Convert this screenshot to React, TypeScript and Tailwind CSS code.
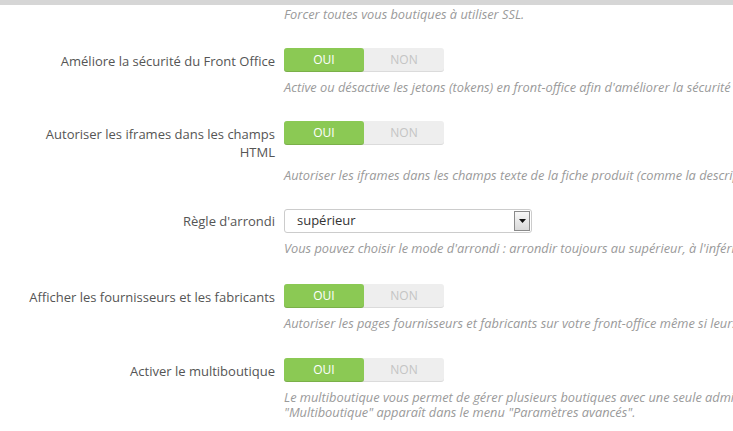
import React from "react";

const Toggle = () => (
  <div className="flex h-[24px] w-[160px] rounded-[3px] bg-[#eeeeee] shadow-[inset_0_-1px_0_rgba(0,0,0,0.08)]">
    <div className="flex w-[80px] items-center justify-center rounded-[3px] bg-[#8bc954] text-[12px] text-white shadow-[inset_0_-1px_0_rgba(0,0,0,0.12)]">
      OUI
    </div>
    <div className="flex w-[80px] items-center justify-center text-[12px] text-[#c4c4c4]">NON</div>
  </div>
);

const Help = ({ children, mt = "mt-[8px]" }: { children: React.ReactNode; mt?: string }) => (
  <div className="flex">
    <div className="w-[284px] shrink-0" />
    <p className={`${mt} whitespace-nowrap text-[12.8px] italic leading-[15px] text-[#9a9a9a]`}>{children}</p>
  </div>
);

const Row = ({
  label,
  children,
  pt = "pt-[4px]",
}: {
  label: React.ReactNode;
  children: React.ReactNode;
  pt?: string;
}) => (
  <div className="flex items-start">
    <div className={`w-[284px] shrink-0 pl-[12px] pr-[9px] ${pt} text-right text-[13px] leading-[18px] text-[#555555]`}>
      {label}
    </div>
    <div className="min-w-0 flex-1">{children}</div>
  </div>
);

export default function App() {
  return (
    <div
      className="h-[431px] w-[733px] overflow-hidden bg-white"
      style={{ fontFamily: '"Open Sans", sans-serif' }}
    >
      <div className="h-[5px] bg-[#d6d6d6]" />
      <Help mt="mt-[2px]">Forcer toutes vous boutiques à utiliser SSL.</Help>

      <div className="mt-[26px]">
        <Row label="Améliore la sécurité du Front Office">
          <Toggle />
        </Row>
        <Help>Active ou désactive les jetons (tokens) en front-office afin d'améliorer la sécurité de PrestaShop.</Help>
      </div>

      <div className="mt-[26px]">
        <Row label="Autoriser les iframes dans les champs HTML">
          <Toggle />
        </Row>
        <Help mt="mt-[7px]">Autoriser les iframes dans les champs texte de la fiche produit (comme la description).</Help>
      </div>

      <div className="mt-[26px]">
        <Row label="Règle d'arrondi" pt="pt-[3px]">
          <div className="flex h-[24px] w-[248px] items-center rounded-[3px] border border-[#cccccc] bg-white">
            <span className="flex-1 pl-[12px] text-[13px] text-[#333]">supérieur</span>
            <div className="mr-[1px] flex h-[20px] w-[16px] items-center justify-center border border-[#8a8a8a] bg-gradient-to-b from-[#f8f8f8] to-[#d9d9d9]">
              <svg width="7" height="4" viewBox="0 0 7 4">
                <path d="M0 0h7L3.5 4z" fill="#111" />
              </svg>
            </div>
          </div>
        </Row>
        <Help>Vous pouvez choisir le mode d'arrondi : arrondir toujours au supérieur, à l'inférieur.</Help>
      </div>

      <div className="mt-[28px]">
        <Row label="Afficher les fournisseurs et les fabricants">
          <Toggle />
        </Row>
        <Help>Autoriser les pages fournisseurs et fabricants sur votre front-office même si leurs modules sont désactivés.</Help>
      </div>

      <div className="mt-[27px]">
        <Row label="Activer le multiboutique">
          <Toggle />
        </Row>
        <Help>
          Le multiboutique vous permet de gérer plusieurs boutiques avec une seule administration. Si cette option est activée, un onglet
          <br />
          "Multiboutique" apparaît dans le menu "Paramètres avancés".
        </Help>
      </div>
    </div>
  );
}
